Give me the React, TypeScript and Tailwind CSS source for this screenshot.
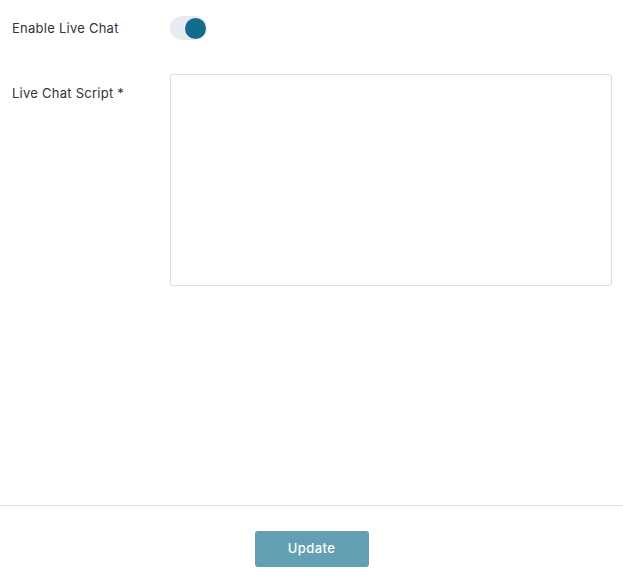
import { useState } from 'react'

export default function App() {
  const [enabled, setEnabled] = useState(true)
  const [script, setScript] = useState('')

  return (
    <div
      className="flex h-[575px] w-full flex-col bg-white text-[#333333]"
      style={{ fontFamily: 'Inter, "Noto Sans", sans-serif' }}
    >
      {/* Form fields */}
      <div className="flex flex-1 flex-col gap-[34px] pl-3 pr-[11px] pt-4">
        <div className="flex items-center">
          <label className="w-[158px] text-[13px] leading-5 tracking-[0.25px]">Enable Live Chat</label>
          <button
            type="button"
            onClick={() => setEnabled(!enabled)}
            className={`flex h-6 w-[37px] items-center rounded-full bg-[#e7eaf1] px-[1px] ${enabled ? 'justify-end' : 'justify-start'}`}
          >
            <span className={`h-[21px] w-[21px] rounded-full ${enabled ? 'bg-[#126b8c]' : 'bg-white shadow'}`} />
          </button>
        </div>

        <div className="flex items-start">
          <label className="w-[158px] pt-[9px] text-[13px] leading-5 tracking-[0.25px]">Live Chat Script *</label>
          <textarea
            value={script}
            onChange={(e) => setScript(e.target.value)}
            className="h-[212px] flex-1 resize-none rounded-[3px] border border-[#dcdce3] p-2 text-[13px] outline-none"
          />
        </div>
      </div>

      {/* Footer */}
      <div className="flex h-[70px] justify-center border-t border-[#e3e3e3] pt-[25px]">
        <button
          type="button"
          className="h-9 w-[114px] rounded-[3px] bg-[#63a0b3] text-[13px] font-medium tracking-[0.4px] text-white"
        >
          Update
        </button>
      </div>
    </div>
  )
}
